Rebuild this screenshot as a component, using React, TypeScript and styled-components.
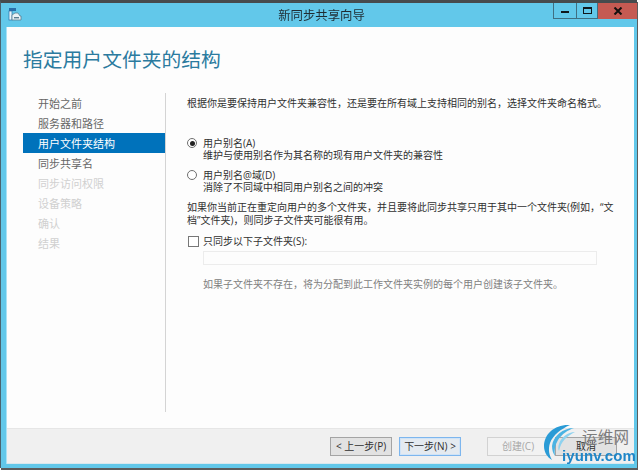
import styled, { createGlobalStyle } from 'styled-components';

const GlobalStyle = createGlobalStyle`
  html, body {
    margin: 0;
    padding: 0;
    background: #ffffff;
  }
  body {
    font-family: 'Open Sans', 'Noto Sans CJK SC', sans-serif;
    font-size: 10px;
    color: #303030;
  }
`;

const Screen = styled.div`
  width: 644px;
  height: 472px;
  position: relative;
  overflow: hidden;
  filter: blur(0.35px);
`;

const Window = styled.div`
  box-sizing: border-box;
  width: 637px;
  height: 468px;
  display: flex;
  flex-direction: column;
  background: #62c8ea;
  border-top: 3px solid #474b4d;
  border-left: 1px solid #4a6470;
  box-shadow: 1px 2px 0 #5c5c5c;
  padding: 0 3px 4px 5px;
`;

const TitleBar = styled.div`
  height: 24px;
  flex: none;
  display: flex;
  align-items: flex-start;
  position: relative;
  margin: 0 -3px 0 0;
`;

const AppIcon = styled.svg`
  width: 14px;
  height: 14px;
  margin: 4px 0 0 2px;
  flex: none;
`;

const TitleText = styled.div`
  position: absolute;
  left: 0;
  right: 0;
  top: 3px;
  text-align: center;
  font-size: 12.4px;
  line-height: 20px;
  color: #1f2c32;
`;

const Controls = styled.div`
  margin-left: auto;
  display: flex;
  height: 16px;
  position: relative;
`;

const ControlButton = styled.div<{ $w: number; $close?: boolean }>`
  box-sizing: border-box;
  width: ${(p) => p.$w}px;
  height: 16px;
  display: flex;
  align-items: center;
  justify-content: center;
  background: ${(p) => (p.$close ? '#c55a52' : 'transparent')};
  border: ${(p) => (p.$close ? 'none' : '1px solid #3f6f82')};
  border-top: none;
  margin-left: ${(p) => (p.$close ? '0' : '-1px')};
`;

const MinGlyph = styled.span`
  width: 8px;
  height: 2px;
  margin-top: 3px;
  background: #10181c;
`;

const MaxGlyph = styled.span`
  box-sizing: border-box;
  width: 9px;
  height: 7px;
  border: 1px solid #10181c;
  border-top-width: 2px;
`;

const Client = styled.div`
  flex: 1;
  min-height: 0;
  display: flex;
  flex-direction: column;
  background: #fdfdfd;
  border-left: 1px solid #a8e2f6;
`;

const Main = styled.div`
  flex: 1;
  min-height: 0;
  padding: 19px 0 0 16px;
`;

const Heading = styled.h1`
  margin: 0 0 19px;
  font-size: 19.8px;
  font-weight: 400;
  line-height: 28px;
  color: #2b7b9f;
`;

const Columns = styled.div`
  display: flex;
  height: 319px;
`;

const Nav = styled.div`
  box-sizing: content-box;
  width: 142px;
  flex: none;
  border-right: 1.5px solid #d4d4d4;
`;

const NavItem = styled.div<{ $state: 'done' | 'active' | 'off' }>`
  height: 20px;
  line-height: 21px;
  padding-left: 15px;
  font-size: 11px;
  color: ${(p) =>
    p.$state === 'active' ? '#ffffff' : p.$state === 'done' ? '#666666' : '#d0d0d0'};
  background: ${(p) => (p.$state === 'active' ? '#0072bb' : 'transparent')};
`;

const Content = styled.div`
  padding: 3px 0 0 21px;
  flex: 1;
`;

const Intro = styled.p`
  margin: 0 0 27px;
  line-height: 14px;
`;

const Option = styled.div<{ $gap?: number }>`
  display: grid;
  grid-template-columns: 16px 1fr;
  line-height: 12px;
  margin-bottom: ${(p) => p.$gap ?? 8}px;
`;

const Radio = styled.span<{ $on?: boolean }>`
  box-sizing: border-box;
  width: 10px;
  height: 10px;
  margin-top: 1px;
  border-radius: 50%;
  border: 1px solid #6f6f6f;
  background: #fff;
  display: flex;
  align-items: center;
  justify-content: center;
  &::after {
    content: '';
    width: 5px;
    height: 5px;
    border-radius: 50%;
    background: ${(p) => (p.$on ? '#222' : 'transparent')};
  }
`;

const Paragraph = styled.p`
  margin: 0 0 8px;
  line-height: 13px;
`;

const CheckRow = styled.div`
  display: grid;
  grid-template-columns: 16px 1fr;
  line-height: 12px;
  margin-bottom: 4px;
`;

const CheckBox = styled.span`
  box-sizing: border-box;
  width: 11px;
  height: 11px;
  margin: 1px 0 0 1px;
  border: 1px solid #777;
  background: #fff;
`;

const PathInput = styled.div`
  box-sizing: border-box;
  width: 394px;
  height: 14px;
  margin: 0 0 13px 16px;
  background: #fdfdfd;
  border: 1px solid #ececec;
`;

const Hint = styled.p`
  margin: 0 0 0 16px;
  line-height: 12px;
  color: #808080;
`;

const Footer = styled.div`
  box-sizing: border-box;
  height: 36px;
  flex: none;
  display: flex;
  align-items: center;
  justify-content: flex-end;
  padding: 0 17px 0 0;
  background: #f0f0f0;
  border-top: 1px solid #e6e6e6;
  border-bottom: 1px solid #d8e8ee;
`;

const WizardButton = styled.button<{ $kind?: 'default' | 'off'; $after?: number }>`
  box-sizing: border-box;
  width: 62px;
  height: 19px;
  padding: 0;
  margin-right: ${(p) => p.$after ?? 0}px;
  font-family: inherit;
  font-size: 10px;
  line-height: 15px;
  color: ${(p) => (p.$kind === 'off' ? '#a8a8a8' : '#303030')};
  background: ${(p) =>
    p.$kind === 'off' ? '#f2f2f2' : p.$kind === 'default' ? '#e4eaf0' : '#e2e2e2'};
  border: 1px solid
    ${(p) => (p.$kind === 'off' ? '#d2d2d2' : p.$kind === 'default' ? '#7db6ee' : '#a4a4a4')};
  ${(p) => (p.$kind === 'default' ? 'box-shadow: inset 0 0 0 1px #cfe3f7;' : '')}
`;

const Watermark = styled.div`
  position: absolute;
  left: 543px;
  top: 423px;
  width: 101px;
  height: 46px;
`;

const WatermarkLogo = styled.svg`
  position: absolute;
  left: 0;
  top: 0;
  width: 42px;
  height: 44px;
`;

const WatermarkName = styled.div`
  position: absolute;
  left: 39px;
  top: 5px;
  font-size: 15.5px;
  line-height: 18px;
  letter-spacing: 0.2px;
  white-space: nowrap;
  color: #7c7c7c;
`;

const WatermarkDomain = styled.div`
  position: absolute;
  left: 19px;
  top: 24px;
  font-family: 'Liberation Sans', sans-serif;
  font-size: 15px;
  font-weight: 700;
  line-height: 18px;
  letter-spacing: 0.1px;
  white-space: nowrap;
  color: #1f86c8;
`;

const steps: { label: string; state: 'done' | 'active' | 'off' }[] = [
  { label: '开始之前', state: 'done' },
  { label: '服务器和路径', state: 'done' },
  { label: '用户文件夹结构', state: 'active' },
  { label: '同步共享名', state: 'done' },
  { label: '同步访问权限', state: 'off' },
  { label: '设备策略', state: 'off' },
  { label: '确认', state: 'off' },
  { label: '结果', state: 'off' },
];

export default function App() {
  return (
    <>
      <GlobalStyle />
      <Screen>
        <Window>
          <TitleBar>
            <AppIcon viewBox="0 0 14 14">
              <rect x="1" y="1" width="7" height="3" fill="#2b6fa8" />
              <rect x="1" y="4" width="3" height="9" fill="#eaf6fb" stroke="#2b6fa8" strokeWidth="0.7" />
              <path d="M4 8 L7 6 L10 6 L12 9 L13 9 L13 13 L4 13 Z" fill="#e9f2f6" stroke="#5a7f92" strokeWidth="0.8" />
              <rect x="6" y="10" width="5" height="1.4" fill="#5a7f92" />
            </AppIcon>
            <TitleText>新同步共享向导</TitleText>
            <Controls>
              <ControlButton $w={24}>
                <MinGlyph />
              </ControlButton>
              <ControlButton $w={22}>
                <MaxGlyph />
              </ControlButton>
              <ControlButton $w={39} $close>
                <svg width="10" height="8" viewBox="0 0 10 8">
                  <path d="M1.5 0.5 L8.5 7.5 M8.5 0.5 L1.5 7.5" stroke="#14100f" strokeWidth="2" />
                </svg>
              </ControlButton>
            </Controls>
          </TitleBar>
          <Client>
            <Main>
              <Heading>指定用户文件夹的结构</Heading>
              <Columns>
                <Nav>
                  {steps.map((s) => (
                    <NavItem key={s.label} $state={s.state}>
                      {s.label}
                    </NavItem>
                  ))}
                </Nav>
                <Content>
                  <Intro>根据你是要保持用户文件夹兼容性，还是要在所有域上支持相同的别名，选择文件夹命名格式。</Intro>
                  <Option>
                    <Radio $on />
                    <div>
                      用户别名(A)
                      <br />
                      维护与使用别名作为其名称的现有用户文件夹的兼容性
                    </div>
                  </Option>
                  <Option>
                    <Radio />
                    <div>
                      用户别名@域(D)
                      <br />
                      消除了不同域中相同用户别名之间的冲突
                    </div>
                  </Option>
                  <Paragraph>
                    如果你当前正在重定向用户的多个文件夹，并且要将此同步共享只用于其中一个文件夹(例如，“文
                    <br />
                    档”文件夹)，则同步子文件夹可能很有用。
                  </Paragraph>
                  <CheckRow>
                    <CheckBox />
                    <div>只同步以下子文件夹(S):</div>
                  </CheckRow>
                  <PathInput />
                  <Hint>如果子文件夹不存在，将为分配到此工作文件夹实例的每个用户创建该子文件夹。</Hint>
                </Content>
              </Columns>
            </Main>
            <Footer>
              <WizardButton $after={7}>&lt; 上一步(P)</WizardButton>
              <WizardButton $kind="default" $after={26}>
                下一步(N) &gt;
              </WizardButton>
              <WizardButton $kind="off" $after={6}>
                创建(C)
              </WizardButton>
              <WizardButton>取消</WizardButton>
            </Footer>
          </Client>
        </Window>
        <Watermark>
          <WatermarkLogo viewBox="0 0 42 44">
            <path d="M27 2 C12 1 1 11 1 23 C1 29 4 34 9 37 C6 32 5 26 7 20 C10 12 18 6 27 2 Z" fill="#2a9bd6" />
            <path d="M31 5 C20 5 10 13 9 23 C9 27 10 30 12 33 C11 27 12 22 15 17 C19 11 25 7 31 5 Z" fill="#4ab3e3" />
            <path d="M32 9 C25 9 18 14 16 21 C15 24 15 26 16 28 C17 23 19 19 22 16 C25 13 28 11 32 9 Z" fill="#8ed2ef" />
          </WatermarkLogo>
          <WatermarkName>运维网</WatermarkName>
          <WatermarkDomain>iyunv.com</WatermarkDomain>
        </Watermark>
      </Screen>
    </>
  );
}
